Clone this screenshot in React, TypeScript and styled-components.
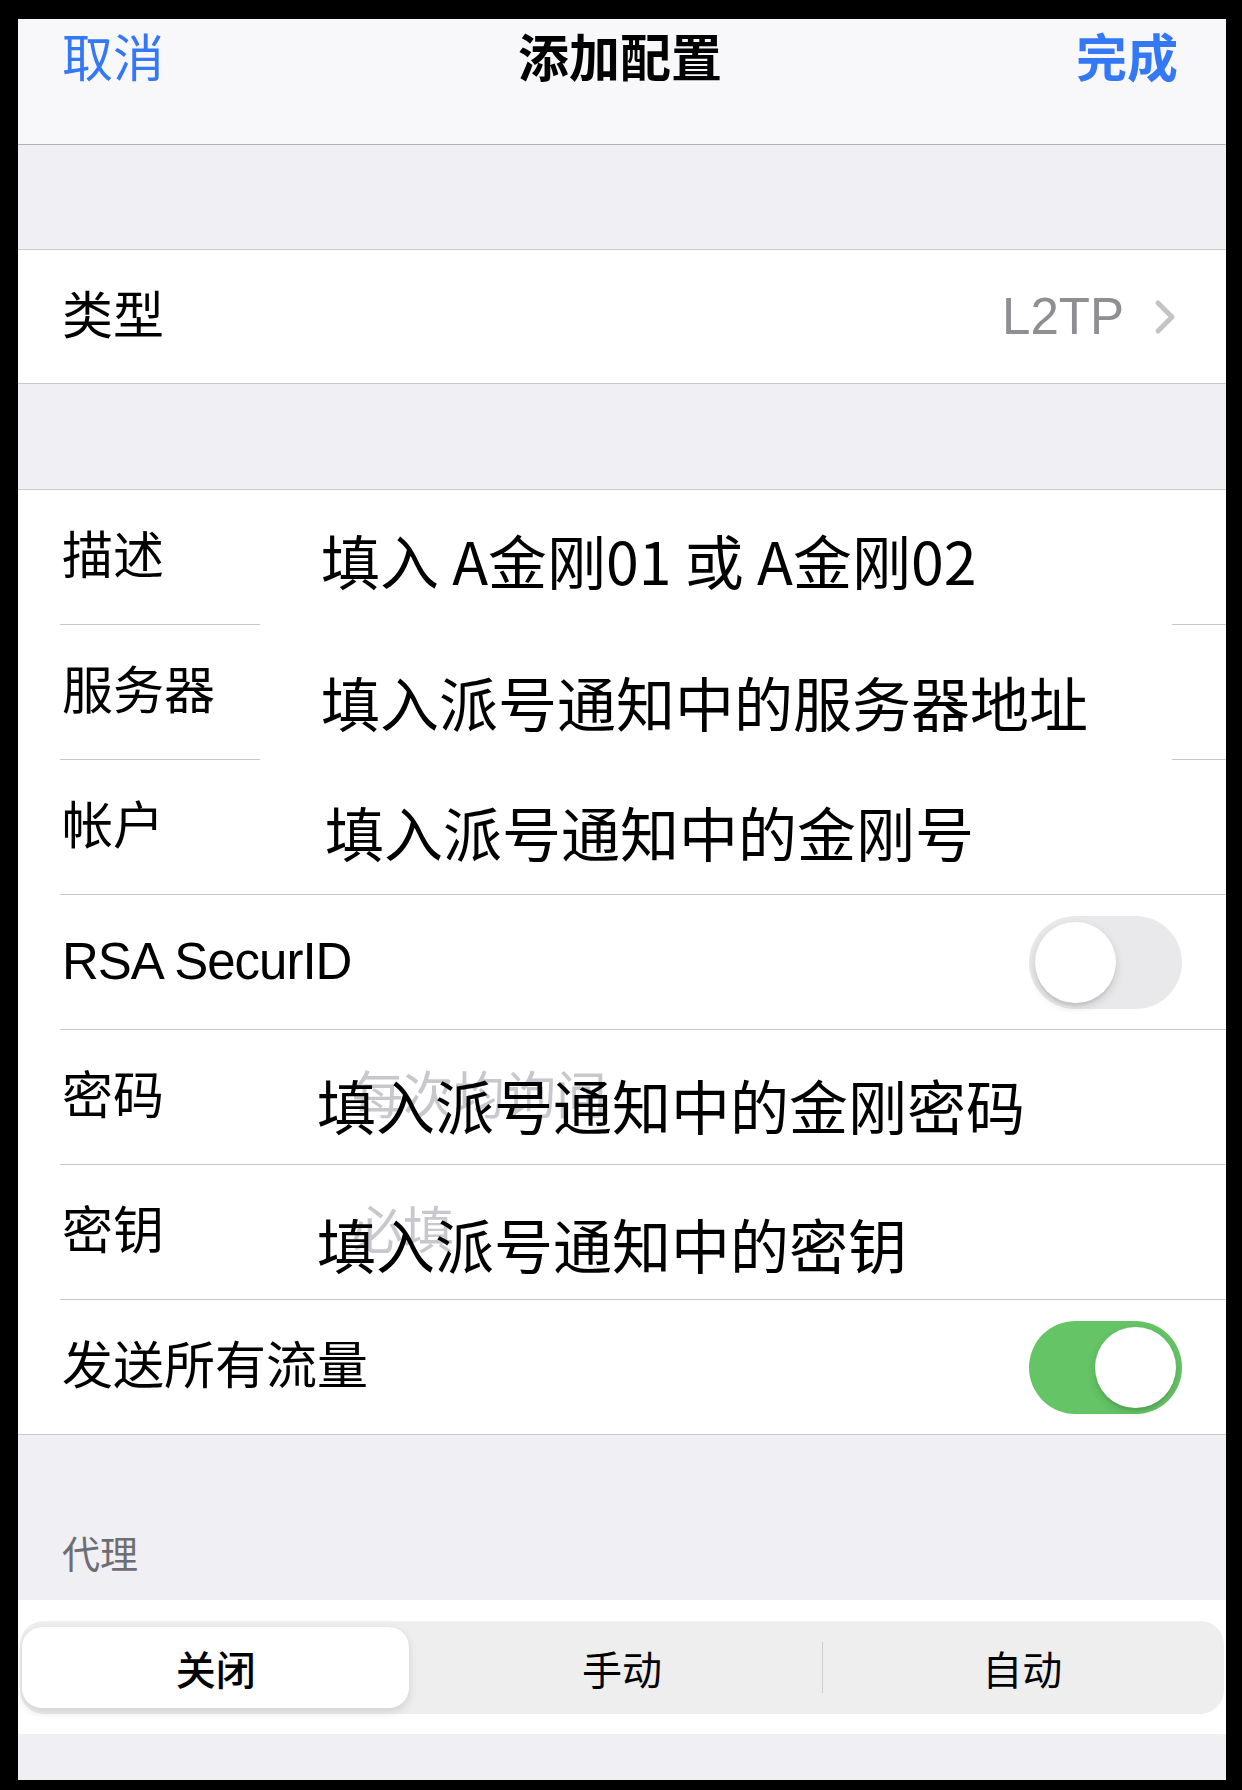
import React from "react";
import styled, { createGlobalStyle } from "styled-components";

const GlobalStyle = createGlobalStyle`
  html, body { margin: 0; padding: 0; background: #000; }
  body { font-family: "Liberation Sans", "Noto Sans CJK SC", sans-serif; color: #000; }
  * { box-sizing: border-box; }
`;

const Screen = styled.div`
  margin: 19px 16px 10px 18px;
  width: 1208px;
  height: 1761px;
  background: #efeff4;
  display: flex;
  flex-direction: column;
  overflow: hidden;
`;

const NavBar = styled.header`
  height: 126px;
  flex-shrink: 0;
  background: #f8f8fa;
  border-bottom: 1px solid #b1b1b4;
  display: grid;
  grid-template-columns: 1fr auto 1fr;
  align-items: start;
  padding: 11px 48px 0 44px;
`;

const NavButton = styled.span<{ $align: "left" | "right"; $bold?: boolean }>`
  color: #3478f6;
  font-size: 51px;
  line-height: 60px;
  font-weight: ${(p) => (p.$bold ? 600 : 400)};
  text-align: ${(p) => p.$align};
`;

const NavTitle = styled.span`
  font-size: 51px;
  line-height: 60px;
  font-weight: 600;
`;

const Gap = styled.div<{ $h: number }>`
  height: ${(p) => p.$h}px;
  flex-shrink: 0;
`;

const Group = styled.section`
  background: #fff;
  border-top: 1px solid #c8c7cc;
  border-bottom: 1px solid #c8c7cc;
  flex-shrink: 0;
`;

const Row = styled.div<{ $h?: number }>`
  height: ${(p) => p.$h ?? 134}px;
  display: flex;
  align-items: center;
  padding: 0 44px;
`;

const Label = styled.span<{ $tight?: boolean }>`
  width: 255px;
  flex-shrink: 0;
  font-size: 51px;
  line-height: 60px;
  white-space: nowrap;
  letter-spacing: ${(p) => (p.$tight ? "-1px" : "0")};
`;

const Fill = styled.div`
  flex: 1;
`;

const Value = styled.span`
  color: #8e8e93;
  font-size: 51px;
  line-height: 60px;
  margin-right: 30px;
`;

const Chevron = styled.svg`
  width: 22px;
  height: 36px;
  margin-right: 6px;
  flex-shrink: 0;
`;

const Field = styled.div`
  flex: 1;
  display: grid;
  align-items: center;
  & > * {
    grid-area: 1 / 1;
  }
`;

const Placeholder = styled.span`
  margin-left: 35px;
  color: #c7c7cd;
  font-size: 51px;
  line-height: 60px;
  white-space: nowrap;
`;

const Entry = styled.span<{ $dx: number; $dy: number }>`
  margin-left: ${(p) => p.$dx}px;
  transform: translateY(${(p) => p.$dy}px);
  font-family: "Noto Sans CJK SC", "Liberation Sans", sans-serif;
  font-size: 59px;
  line-height: 70px;
  color: #000;
  white-space: nowrap;
`;

const Divider = styled.div`
  margin-left: 42px;
  height: 1px;
  display: flex;
  justify-content: space-between;
`;

const Line = styled.div<{ $w?: number }>`
  height: 1px;
  background: #c8c7cc;
  ${(p) => (p.$w ? `width: ${p.$w}px;` : "flex: 1;")}
`;

const Track = styled.div<{ $on: boolean }>`
  width: 153px;
  height: 93px;
  flex-shrink: 0;
  border-radius: 47px;
  padding: 6px;
  display: flex;
  justify-content: ${(p) => (p.$on ? "flex-end" : "flex-start")};
  background: ${(p) => (p.$on ? "#65c466" : "#e9e9eb")};
`;

const Knob = styled.div`
  width: 81px;
  height: 81px;
  border-radius: 50%;
  background: #fff;
  box-shadow: 0 4px 10px rgba(0, 0, 0, 0.14), 0 3px 1px rgba(0, 0, 0, 0.05);
`;

const SectionHeader = styled.div`
  height: 165px;
  flex-shrink: 0;
  display: flex;
  align-items: flex-end;
  padding: 0 44px 22px;
  color: #6d6d72;
  font-size: 38px;
  line-height: 46px;
`;

const SegmentArea = styled.div`
  height: 134px;
  flex-shrink: 0;
  background: #fff;
  padding: 21px 2px 0;
`;

const SegmentControl = styled.div`
  height: 93px;
  background: #eeeeef;
  border-radius: 24px;
  padding: 6px 2px;
  display: grid;
  grid-template-columns: 1fr 1px 1fr 1px 1fr;
  align-items: center;
`;

const Segment = styled.div<{ $active?: boolean }>`
  height: 81px;
  display: flex;
  align-items: center;
  justify-content: center;
  font-size: 40px;
  font-weight: ${(p) => (p.$active ? 500 : 400)};
  border-radius: 20px;
  background: ${(p) => (p.$active ? "#fff" : "transparent")};
  box-shadow: ${(p) =>
    p.$active ? "0 4px 10px rgba(0,0,0,0.12), 0 0 1px rgba(0,0,0,0.06)" : "none"};
  margin-right: ${(p) => (p.$active ? 12 : 0)}px;
`;

const SegDivider = styled.div<{ $show: boolean }>`
  width: 1px;
  height: 51px;
  background: ${(p) => (p.$show ? "#cdcdd1" : "transparent")};
`;

const BottomFill = styled.div`
  flex: 1;
`;

const BrokenDivider = () => (
  <Divider>
    <Line $w={200} />
    <Line $w={54} />
  </Divider>
);

const FullDivider = () => (
  <Divider>
    <Line />
  </Divider>
);

export default function App() {
  return (
    <>
      <GlobalStyle />
      <Screen>
        <NavBar>
          <NavButton $align="left">取消</NavButton>
          <NavTitle>添加配置</NavTitle>
          <NavButton $align="right" $bold>
            完成
          </NavButton>
        </NavBar>

        <Gap $h={104} />

        <Group>
          <Row $h={133}>
            <Label>类型</Label>
            <Fill />
            <Value>L2TP</Value>
            <Chevron viewBox="0 0 22 36">
              <polyline
                points="4,4 18,18 4,32"
                fill="none"
                stroke="#c4c4c7"
                strokeWidth="5"
                strokeLinecap="round"
                strokeLinejoin="round"
              />
            </Chevron>
          </Row>
        </Group>

        <Gap $h={105} />

        <Group>
          <Row>
            <Label>描述</Label>
            <Field>
              <Entry $dx={4} $dy={3}>填入 A金刚01 或 A金刚02</Entry>
            </Field>
          </Row>
          <BrokenDivider />
          <Row>
            <Label>服务器</Label>
            <Field>
              <Entry $dx={4} $dy={10}>填入派号通知中的服务器地址</Entry>
            </Field>
          </Row>
          <BrokenDivider />
          <Row>
            <Label>帐户</Label>
            <Field>
              <Entry $dx={8} $dy={5}>填入派号通知中的金刚号</Entry>
            </Field>
          </Row>
          <FullDivider />
          <Row>
            <Label $tight>RSA SecurID</Label>
            <Fill />
            <Track $on={false}>
              <Knob />
            </Track>
          </Row>
          <FullDivider />
          <Row>
            <Label>密码</Label>
            <Field>
              <Placeholder>每次均询问</Placeholder>
              <Entry $dx={0} $dy={8}>填入派号通知中的金刚密码</Entry>
            </Field>
          </Row>
          <FullDivider />
          <Row>
            <Label>密钥</Label>
            <Field>
              <Placeholder>必填</Placeholder>
              <Entry $dx={0} $dy={12}>填入派号通知中的密钥</Entry>
            </Field>
          </Row>
          <FullDivider />
          <Row>
            <Label>发送所有流量</Label>
            <Fill />
            <Track $on>
              <Knob />
            </Track>
          </Row>
        </Group>

        <SectionHeader>代理</SectionHeader>

        <SegmentArea>
          <SegmentControl>
            <Segment $active>关闭</Segment>
            <SegDivider $show={false} />
            <Segment>手动</Segment>
            <SegDivider $show />
            <Segment>自动</Segment>
          </SegmentControl>
        </SegmentArea>

        <BottomFill />
      </Screen>
    </>
  );
}
